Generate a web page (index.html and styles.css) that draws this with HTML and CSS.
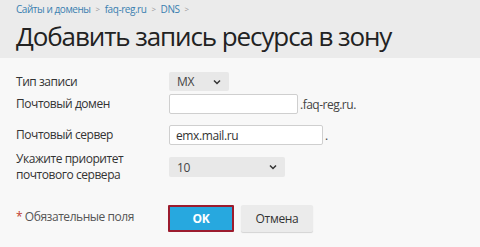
FILE: index.html
```html
<!DOCTYPE html>
<html>
<head>
    <meta charset="utf-8">
    <link rel="stylesheet" href="styles.css">
</head>
<body>
    <div class="header">
        <div class="breadcrumbs">
            <a class="crumb">Сайты и домены</a>
            <span class="sep">&gt;</span>
            <a class="crumb">faq-reg.ru</a>
            <span class="sep">&gt;</span>
            <a class="crumb">DNS</a>
            <span class="sep">&gt;</span>
        </div>
        <h1 class="title">Добавить запись ресурса в зону</h1>
    </div>

    <div class="form">
        <div class="row row-type">
            <div class="label">Тип записи</div>
            <div class="field">
                <div class="select select-type">
                    <span>MX</span>
                    <svg width="8" height="6" viewBox="0 0 8 6"><path d="M1 1.5 L4 4.5 L7 1.5" fill="none" stroke="#333" stroke-width="1.5"/></svg>
                </div>
            </div>
        </div>
        <div class="row row-domain">
            <div class="label">Почтовый домен</div>
            <div class="field">
                <input class="input input-domain" type="text" value="">
                <span class="suffix">.faq-reg.ru.</span>
            </div>
        </div>
        <div class="row row-server">
            <div class="label">Почтовый сервер</div>
            <div class="field">
                <input class="input input-server" type="text" value="emx.mail.ru">
                <span class="suffix">.</span>
            </div>
        </div>
        <div class="row row-priority">
            <div class="label">Укажите приоритет<br>почтового сервера</div>
            <div class="field">
                <div class="select select-priority">
                    <span>10</span>
                    <svg width="8" height="6" viewBox="0 0 8 6"><path d="M1 1.5 L4 4.5 L7 1.5" fill="none" stroke="#333" stroke-width="1.5"/></svg>
                </div>
            </div>
        </div>
        <div class="row row-actions">
            <div class="label required"><span class="star">*</span> Обязательные поля</div>
            <div class="field buttons">
                <button class="btn btn-ok">OK</button>
                <button class="btn btn-cancel">Отмена</button>
            </div>
        </div>
    </div>
</body>
</html>
```

FILE: styles.css
```css
* {
    margin: 0;
    padding: 0;
    box-sizing: border-box;
}

body {
    width: 480px;
    height: 247px;
    overflow: hidden;
    font-family: 'Open Sans', 'Noto Sans', sans-serif;
    background: #f8f8f8;
    color: #333;
}

.header {
    background: #ebebeb;
    height: 58px;
    padding: 2px 16px 0;
}

.breadcrumbs {
    display: flex;
    align-items: center;
    gap: 5px;
    font-size: 10px;
    line-height: 14px;
    letter-spacing: -0.45px;
}

.crumb {
    color: #3a7fb0;
}

.sep {
    color: #999;
    font-size: 8px;
}

.title {
    font-size: 26px;
    font-weight: 400;
    line-height: 30px;
    color: #222;
    margin-top: 5px;
    letter-spacing: -1.1px;
}

.form {
    padding: 14px 0 0 16px;
}

.row {
    display: flex;
    align-items: center;
}

.label {
    width: 153px;
    font-size: 12px;
    line-height: 16px;
    color: #333;
    letter-spacing: -0.45px;
}

.field {
    display: flex;
    align-items: center;
    font-size: 12px;
}

.select {
    height: 19px;
    background: #e8e8e8;
    border-radius: 2px;
    display: flex;
    align-items: center;
    justify-content: space-between;
    padding: 0 8px;
    font-size: 12px;
    color: #444;
    letter-spacing: -0.3px;
}

.select-type {
    width: 60px;
}

.select-priority {
    width: 116px;
    height: 20px;
}

.input {
    height: 20px;
    background: #fff;
    border: 1px solid #cfcfcf;
    border-radius: 2px;
    font-family: inherit;
    font-size: 12px;
    color: #333;
    padding: 0 6px;
    letter-spacing: -0.4px;
}

.input-domain {
    width: 129px;
}

.input-server {
    width: 154px;
}

.suffix {
    margin-left: 2px;
    font-size: 12px;
    color: #444;
    letter-spacing: -0.5px;
}

.row-domain {
    margin-top: 3px;
}

.row-server {
    margin-top: 11px;
}

.row-priority {
    margin-top: 6px;
}

.row-actions {
    margin-top: 22px;
}

.required {
    color: #555;
    padding-bottom: 4px;
}

.star {
    color: #c0392b;
}

.buttons {
    gap: 7px;
    align-items: flex-start;
}

.btn {
    font-family: inherit;
    font-size: 12px;
    height: 27px;
    border: none;
    border-radius: 2px;
    cursor: pointer;
    letter-spacing: -0.3px;
}

.btn-ok {
    width: 66px;
    background: #27a8df;
    color: #fff;
    font-weight: 700;
    border: 2px solid #9c1c2e;
    border-radius: 1px;
    margin-left: -1px;
}

.btn-cancel {
    width: 72px;
    background: #ebebeb;
    color: #333;
    box-shadow: 0 1px 1px rgba(0, 0, 0, 0.15);
}
```
